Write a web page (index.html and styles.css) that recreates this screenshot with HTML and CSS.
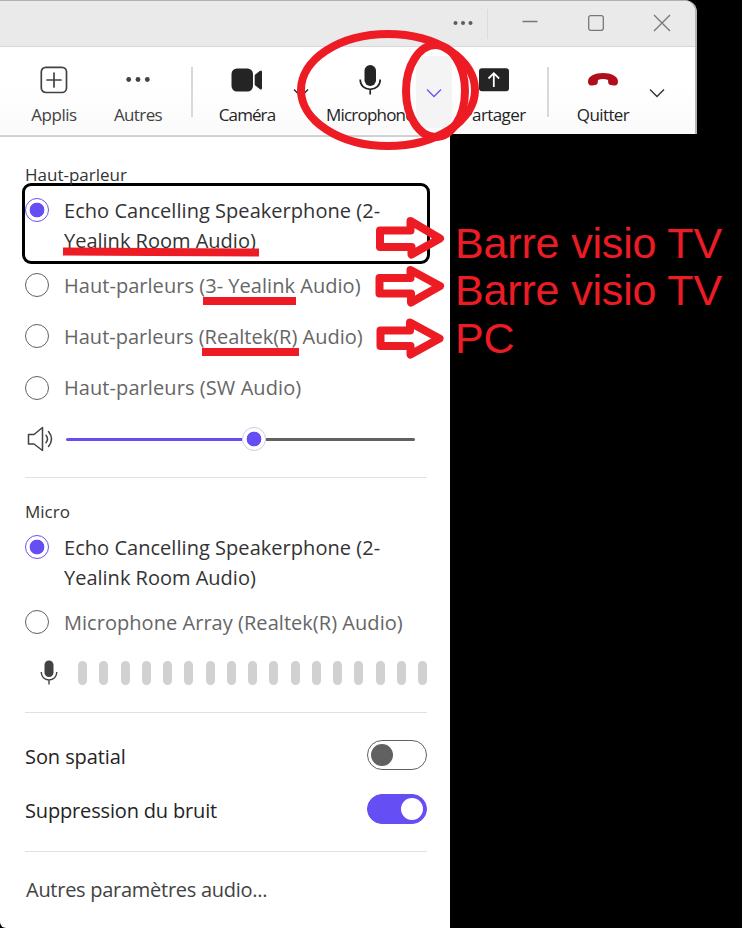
FILE: index.html
```html
<!DOCTYPE html>
<html lang="fr">
<head>
<meta charset="utf-8">
<title>Microphone</title>
<link rel="stylesheet" href="styles.css">
</head>
<body>
<main class="stage">
  <header class="window">
    <div class="titlebar">
      <svg class="tb-dots" width="20" height="6" viewBox="0 0 20 6" fill="#5c5c5c"><circle cx="2.5" cy="3" r="2"/><circle cx="10" cy="3" r="2"/><circle cx="17.500" cy="3" r="2"/></svg>
      <i class="tb-sep"></i>
      <svg class="tb-min" width="16" height="16" viewBox="0 0 16 16" stroke="#777" stroke-width="1.300"><path d="M0.500 6.500h15"/></svg>
      <svg class="tb-max" width="16" height="16" viewBox="0 0 16 16" fill="none" stroke="#777" stroke-width="1.300"><rect x="0.700" y="0.700" width="14.600" height="14.600" rx="2"/></svg>
      <svg class="tb-close" width="18" height="18" viewBox="0 0 18 18" stroke="#777" stroke-width="1.300"><path d="M1 1l16 16M17 1L1 17"/></svg>
    </div>
    <nav class="toolbar">
      <div class="tool soft applis">
        <svg width="28" height="28" viewBox="0 0 28 28" fill="none" stroke="#424242" stroke-width="1.700"><rect x="1.300" y="1.300" width="25.200" height="25.200" rx="4.500"/><path d="M14 7v14M7 14h14" stroke-linecap="round"/></svg>
        <span class="l-applis">Applis</span>
      </div>
      <div class="tool soft autres">
        <svg width="28" height="28" viewBox="0 0 28 28" fill="#424242"><circle cx="4.700" cy="13.500" r="2.400"/><circle cx="14" cy="13.500" r="2.400"/><circle cx="23.300" cy="13.500" r="2.400"/></svg>
        <span class="l-autres">Autres</span>
      </div>
      <i class="bar-sep"></i>
      <div class="tool camera">
        <svg width="32" height="28" viewBox="0 0 32 28" fill="#242424"><rect x="0.500" y="2.500" width="21.500" height="23" rx="5.500"/><path d="M23.700 9l5-4Q31 3.500 31 6v16q0 2.500-2.300 1l-5-4z"/></svg>
        <span class="l-camera">Caméra</span>
      </div>
      <svg class="chev chev-cam" width="16" height="10" viewBox="0 0 16 10" fill="none" stroke="#242424" stroke-width="1.300"><path d="M1 1.500l7 7 7-7"/></svg>
      <div class="tool micro">
        <svg width="24" height="32" viewBox="0 0 24 32"><rect x="6.500" y="1" width="11.500" height="21" rx="5.700" fill="#242424"/><path d="M2.200 15.500c0 6 4.200 9.800 10 9.800s10-3.800 10-9.800M12.200 25.500v5" fill="none" stroke="#242424" stroke-width="1.700"/></svg>
        <span class="l-micro">Microphone</span>
      </div>
      <div class="mic-menu"><svg width="16" height="10" viewBox="0 0 16 10" fill="none" stroke="#6b51f2" stroke-width="1.300"><path d="M1 1.500l7 7 7-7"/></svg></div>
      <div class="tool share">
        <svg width="32" height="28" viewBox="0 0 32 28"><rect x="1" y="2.300" width="30" height="23" rx="3" fill="#242424"/><path d="M15.800 21V7.500M10.500 12.500l5.300-5.300 5.300 5.300" fill="none" stroke="#fff" stroke-width="1.800"/></svg>
        <span class="l-share">Partager</span>
      </div>
      <i class="bar-sep"></i>
      <div class="tool quit">
        <svg width="32" height="28" viewBox="0 0 32 28" fill="#b10e1c"><path d="M1 15.500C1 10 8 7 16 7s15 3 15 8.500c0 3-1.600 4.500-4.200 4l-3.200-.6c-2.600-.5-2.500-2.200-2.500-4.900-3-1.400-7.200-1.400-10.200 0 0 2.700.1 4.400-2.500 4.900l-3.200.6C2.600 20 1 18.500 1 15.500z"/></svg>
        <span class="l-quit">Quitter</span>
      </div>
      <svg class="chev chev-quit" width="16" height="10" viewBox="0 0 16 10" fill="none" stroke="#333" stroke-width="1.400"><path d="M1 1.500l7 7 7-7"/></svg>
    </nav>
  </header>

  <section class="panel">
    <h2 class="speaker-title">Haut-parleur</h2>
    <div class="option focused"><i class="radio on"></i><p><span class="t-echo">Echo Cancelling Speakerphone (2-</span><br><span class="t-room">Yealink Room Audio)</span></p></div>
    <div class="option row first"><i class="radio raised"></i><p class="t-wide">Haut-parleurs (3- Yealink Audio)</p></div>
    <div class="option row"><i class="radio raised"></i><p>Haut-parleurs (Realtek(R) Audio)</p></div>
    <div class="option row"><i class="radio"></i><p class="t-sw">Haut-parleurs (SW Audio)</p></div>
    <div class="volume">
      <svg width="26" height="26" viewBox="0 0 26 26" fill="none" stroke="#424242" stroke-width="1.500" stroke-linejoin="round"><path d="M1.500 8.500h5.500L15.500 1.500v23L7 18H1.500z"/><path d="M19 9.300q3 3.700 0 7.400M21.500 5.500q6 7.500 0 15" stroke-linecap="round"/></svg>
      <div class="track"><i class="filled"></i><i class="thumb"></i><i class="rest"></i></div>
    </div>
    <hr>
    <h2 class="micro-title">Micro</h2>
    <div class="option plain"><i class="radio on"></i><p><span class="t-echo">Echo Cancelling Speakerphone (2-</span><br><span class="t-room">Yealink Room Audio)</span></p></div>
    <div class="option row array"><i class="radio raised"></i><p class="t-wide">Microphone Array (Realtek(R) Audio)</p></div>
    <div class="meter">
      <svg width="18" height="25" viewBox="0 0 18 25"><rect x="4.500" y="0.500" width="9" height="16.500" rx="4.500" fill="#424242"/><path d="M1.200 12c0 4.600 3.300 8 7.800 8s7.800-3.400 7.800-8M9 20v4.500" fill="none" stroke="#424242" stroke-width="1.400"/></svg>
      <div class="levels"><i></i><i></i><i></i><i></i><i></i><i></i><i></i><i></i><i></i><i></i><i></i><i></i><i></i><i></i><i></i><i></i><i></i></div>
    </div>
    <hr>
    <div class="setting spatial"><span class="t-son">Son spatial</span><i class="switch"></i></div>
    <div class="setting noise"><span class="t-bruit">Suppression du bruit</span><i class="switch on"></i></div>
    <hr>
    <div class="more"><span class="t-more">Autres paramètres audio...</span></div>
  </section>

  <aside class="notes">
    <p>Barre visio TV</p>
    <p>Barre visio TV</p>
    <p>PC</p>
  </aside>

  <svg class="marks" width="742" height="928" viewBox="0 0 742 928" fill="none" stroke="#ed1c24" stroke-width="8" stroke-linejoin="round">
    <ellipse cx="388" cy="90" rx="87" ry="56"/>
    <ellipse cx="435.500" cy="91" rx="29.500" ry="46"/>
    <path d="M63 251.500L150 252L259 252.500M203 301H296M202 352H299"/>
    <path d="M380 230.500h30.500v-9.500l29.500 17.500-28.500 16v-7.500H380z"/>
    <path d="M379.500 278h31v-8L440 286l-29 16.500v-9h-31.500z"/>
    <path d="M380.500 330.500H410v-8l29.500 16-29 16v-8.500h-30z"/>
  </svg>
</main>
</body>
</html>
```
FILE: styles.css
```css
* { box-sizing: border-box; }
body { margin: 0; background: #000; font-family: "Open Sans", "Noto Sans", sans-serif; color: #242424; }
i { display: block; }
p, h2 { margin: 0; font-weight: 400; }
span, p { white-space: nowrap; }
.stage {
  position: relative; width: 742px; height: 928px; overflow: hidden;
  display: grid; grid-template-columns: 450px 292px; grid-template-rows: 134px 794px;
}
.window {
  grid-column: 1 / 3; width: 697px; height: 134px;
  border-top: 1px solid #b0b0b4; border-right: 2px solid #b4b4b4; border-top-right-radius: 12px;
  overflow: hidden; background: #fff;
}
.titlebar { height: 46px; background: #eaeaea; border-bottom: 1px solid #d8d8d8; display: flex; align-items: center; padding-left: 453px; }
.titlebar svg { margin-top: -1px; }
.tb-sep { width: 1px; height: 30px; background: #dcdcdc; margin-left: 14px; }
.tb-min { margin-left: 34px; }
.tb-max { margin-left: 50px; }
.tb-close { margin-left: 49px; }

.toolbar { height: 87px; display: flex; align-items: flex-start; background: linear-gradient(#fff 45%, #fafafa); }
.tool { display: flex; flex-direction: column; align-items: center; padding-top: 19px; font-size: 17px; line-height: 24px; letter-spacing: -0.600px; flex: none; }
.tool svg { height: 28px; overflow: visible; }
.tool span { margin-top: 9px; }
.soft { color: #424242; }
.applis { width: 58px; margin-left: 25px; }
.autres { width: 58px; margin-left: 26px; }
.l-applis { letter-spacing: -0.450px; }
.l-camera { letter-spacing: -0.900px; }
.bar-sep { width: 2px; height: 50px; background: #d9d9d9; margin-top: 20px; flex: none; }
.autres + .bar-sep { margin-left: 24px; }
.camera { width: 70px; margin-left: 19px; }
.chev { margin-top: 41px; flex: none; }
.chev-cam { margin-left: 11px; }
.micro { width: 90px; margin-left: 16px; }
.micro svg { height: 32px; margin-top: -2px; }
.micro span { margin-top: 7px; }
.l-micro { letter-spacing: -0.800px; }
.mic-menu { width: 36px; height: 72px; margin: 9px 0 0 1px; background: #f4f4f4; display: flex; align-items: center; justify-content: center; z-index: 1; }
.mic-menu svg { margin-top: 2px; }
.share { width: 70px; margin-left: 7px; }
.share + .bar-sep { margin-left: 18px; }
.quit { width: 60px; margin-left: 24px; }
.chev-quit { margin-left: 16px; }

.panel {
  background: #fff; border-top: 1px solid #fff; padding: 3px 23px 0 25px;
  box-shadow: inset 0 3px 0 -1px #d0d0d0; border-bottom-left-radius: 6px; color: #242424;
}
.panel h2 { font-size: 17px; line-height: 20px; color: #333; }
.speaker-title { height: 45px; padding-top: 27px; }
.option { display: flex; font-size: 20px; line-height: 30px; color: #333; }
.option p { margin-left: 15px; }
.t-echo { letter-spacing: 0.040px; }
.t-wide { letter-spacing: 0.040px; }
.t-sw { letter-spacing: 0.080px; }
.radio { width: 24px; height: 24px; border: 1.500px solid #616161; border-radius: 50%; flex: none; }
.radio.raised { margin-bottom: 2px; }
.radio.on { border-color: #6b51f5; background: radial-gradient(circle, #664ef5 7px, #fff 7.700px); }
.focused { width: 408px; height: 81px; margin-left: -3px; border: 3px solid #000; border-radius: 9px; padding-top: 10px; }
.focused .radio { margin-top: 2px; }
.row { height: 51px; align-items: center; color: #666; }
.first { margin-top: -4px; }
.volume { display: flex; align-items: center; height: 50px; padding: 2px 0 0 2px; }
.track { display: flex; align-items: center; width: 349px; margin-left: 13px; }
.filled { width: 176px; height: 3px; background: #664ef5; border-radius: 2px 0 0 2px; }
.thumb { width: 24px; height: 24px; border: 1px solid #cfcbdc; border-radius: 50%; background: radial-gradient(circle, #664ef5 7px, #fff 7.700px); }
.rest { flex: 1; height: 3px; background: #616161; border-radius: 0 2px 2px 0; }
hr { border: 0; height: 1px; background: #e0e0e0; margin: 0; }
.volume + hr { margin-top: 14px; }
.micro-title { padding-top: 24px; height: 55px; }
.plain { height: 64px; }
.plain .radio { margin-top: 2px; }
.array { height: 51px; }
.meter { display: flex; align-items: center; height: 50px; padding-left: 15px; }
.meter svg { margin-top: -1px; }
.levels { display: flex; justify-content: space-between; width: 349px; margin-left: 20px; }
.levels i { width: 9px; height: 24px; border-radius: 5px; background: #d1d1d1; }
.meter + hr { margin-top: 14px; }
.setting { display: flex; align-items: center; justify-content: space-between; height: 30px; font-size: 20px; line-height: 30px; width: 402px; }
.setting span { padding-top: 3px; }
.t-son { letter-spacing: -0.080px; }
.t-bruit { letter-spacing: -0.160px; }
.spatial { margin-top: 27px; }
.noise { margin: 24px 0 27px; }
.switch { width: 60px; height: 30px; border-radius: 15px; border: 1px solid #616161; display: flex; align-items: center; padding-left: 2.500px; }
.switch::before { content: ""; width: 22px; height: 22px; border-radius: 50%; background: #616161; }
.switch.on { background: #664ef5; border-color: #664ef5; padding-left: 33px; }
.switch.on::before { background: #fff; }
.more { font-size: 20px; line-height: 30px; letter-spacing: -0.270px; padding: 23px 0 0 1px; color: #424242; }

.notes { padding: 86px 0 0 5px; font: 43px/47.300px "Liberation Sans", Arial, sans-serif; letter-spacing: -0.160px; color: #ed1c24; }
.marks { position: absolute; left: 0; top: 0; z-index: 2; }
```
